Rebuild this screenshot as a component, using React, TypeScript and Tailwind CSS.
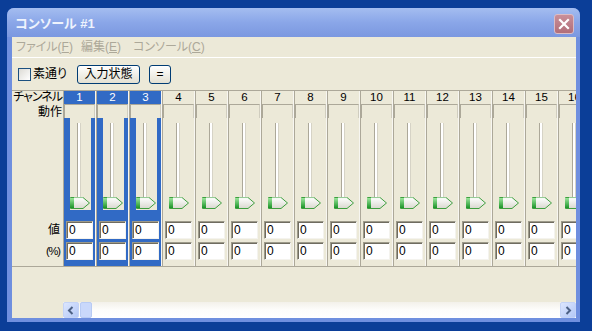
import clsx from "clsx";

const channels = Array.from({ length: 16 }, (_, i) => i + 1);
const selected = [1, 2, 3];

// スライダーのつまみ
function Slider() {
  return (
    <svg width="21" height="92" viewBox="0 0 21 92">
      <defs>
        <linearGradient id="thumbBody" x1="0" y1="0" x2="0" y2="1">
          <stop offset="0" stopColor="#ffffff" />
          <stop offset="1" stopColor="#d9d8cf" />
        </linearGradient>
        <linearGradient id="thumbGreen" x1="0" y1="0" x2="0" y2="1">
          <stop offset="0" stopColor="#9be59b" />
          <stop offset="1" stopColor="#1c9428" />
        </linearGradient>
      </defs>
      <rect x="7" y="5" width="1" height="82" fill="#aca899" />
      <rect x="8" y="5" width="2" height="82" fill="#ffffff" />
      <rect x="10" y="5" width="1" height="82" fill="#d6d3c6" />
      <path d="M0.5 79.5 H13 L19.5 85 L13 90.5 H0.5 Z" fill="url(#thumbBody)" stroke="#3f9f3f" />
      <rect x="0" y="80" width="4" height="10" fill="url(#thumbGreen)" />
      <path d="M4 80 H13" stroke="#eef7ee" />
    </svg>
  );
}

function TextBox() {
  return (
    <div className="ml-[2px] w-[27px] h-[18px] bg-white border border-t-[#9d9a8a] border-l-[#9d9a8a] border-r-[#f4f3ee] border-b-[#f4f3ee] shadow-[inset_1px_1px_0_#6f6c60] pl-[2px] text-[12px] leading-[16px] text-black">
      0
    </div>
  );
}

function Channel({ n }: { n: number }) {
  const on = selected.includes(n);
  return (
    <div className="w-[33px] shrink-0 border-l border-[#aca899] flex">
      <div
        className={clsx(
          "w-[32px] border-r border-[#f7f6f1] flex flex-col",
          on && "bg-[#316ac5]"
        )}
      >
        <div
          className={clsx(
            "h-[13px] text-[11.5px] leading-[13px] text-center",
            on ? "text-white" : "text-black"
          )}
        >
          {n}
        </div>
        <div className="h-[14px] bg-[#ece9d8] border-t border-l border-r border-t-[#aca899] border-l-[#aca899] border-r-[#d0cdbf]" />
        <div className="h-[103px]">
          <div className="ml-[6px] w-[21px] h-[92px] bg-[#ece9d8]">
            <Slider />
          </div>
        </div>
        <TextBox />
        <div className="h-[3px]" />
        <TextBox />
      </div>
    </div>
  );
}

function ScrollButton({ dir }: { dir: "left" | "right" }) {
  return (
    <div className="w-[16px] h-[16px] rounded-[2px] border border-[#c4d3f6] bg-gradient-to-br from-[#dce6fe] to-[#b4c8f6] flex items-center justify-center">
      <svg width="8" height="9" viewBox="0 0 8 9">
        <path
          d={dir === "left" ? "M5.5 1 L2 4.5 L5.5 8" : "M2.5 1 L6 4.5 L2.5 8"}
          fill="none"
          stroke="#4d6185"
          strokeWidth="2"
        />
      </svg>
    </div>
  );
}

export default function App() {
  return (
    <div className="w-[592px] h-[331px] bg-[#0b3e98] pt-[8px] pl-[7px] font-['Liberation_Sans','Noto_Sans_CJK_JP',sans-serif] [font-feature-settings:'palt'] overflow-hidden">
      <div className="w-[573px] h-[314px] rounded-t-[7px] bg-[#6f8fdf] flex flex-col">
        {/* タイトルバー */}
        <div className="h-[29px] rounded-t-[7px] bg-gradient-to-b from-[#a4bdf0] via-[#8aa6e8] to-[#7b98e0] flex items-center pl-[8px] pr-[6px] pt-[3px]">
          <span className="text-[13px] font-bold text-[#eef3fd] flex-1">コンソール #1</span>
          <div className="w-[20px] h-[20px] rounded-[3px] border border-[#dcbcc4] bg-gradient-to-b from-[#c98f99] to-[#b16e79] flex items-center justify-center">
            <svg width="12" height="12" viewBox="0 0 12 12">
              <path d="M2 2 L10 10 M10 2 L2 10" stroke="#ffffff" strokeWidth="2.2" strokeLinecap="square" />
            </svg>
          </div>
        </div>

        {/* クライアント */}
        <div className="ml-[5px] mr-[4px] h-[281px] bg-[#ece9d8] flex flex-col text-[12px] text-black">
          <div className="h-[20px] flex items-center pl-[4px] text-[#aca899] text-[12px]">
            <span className="w-[65px]">ファイル(<span className="underline">F</span>)</span>
            <span className="w-[52px]">編集(<span className="underline">E</span>)</span>
            <span>コンソール(<span className="underline">C</span>)</span>
          </div>
          <div className="h-[1px] bg-white" />

          <div className="h-[32px] flex items-center pl-[6px]">
            <div className="w-[13px] h-[13px] border border-[#1c5180] bg-gradient-to-br from-[#dcdbd5] to-white" />
            <span className="ml-[2px] w-[44px]">素通り</span>
            <div className="w-[63px] h-[19px] rounded-[3px] border border-[#003c74] bg-gradient-to-b from-white to-[#e3e0d2] flex items-center justify-center">
              入力状態
            </div>
            <div className="ml-[9px] w-[22px] h-[19px] rounded-[3px] border border-[#003c74] bg-gradient-to-b from-white to-[#e3e0d2] flex items-center justify-center">
              =
            </div>
          </div>

          {/* チャンネル表 */}
          <div className="flex border-t border-b border-[#aca899] h-[177px]">
            <div className="w-[51px] shrink-0 flex flex-col items-end pr-[1px] whitespace-nowrap">
              <div className="h-[13px] leading-[12px] tracking-[-1px]">チャンネル</div>
              <div className="h-[14px] leading-[16px]">動作</div>
              <div className="h-[103px]" />
              <div className="h-[18px] leading-[18px] pr-[2px]">値</div>
              <div className="h-[3px]" />
              <div className="h-[18px] leading-[18px] pr-[2px] text-[11px] tracking-[-1px]">(%)</div>
            </div>
            <div className="flex-1 min-w-0 flex overflow-x-clip">
              {channels.map((n) => (
                <Channel key={n} n={n} />
              ))}
            </div>
          </div>

          <div className="flex-1" />

          <div className="h-[16px] flex">
            <div className="w-[51px] shrink-0" />
            <div className="flex-1 flex bg-gradient-to-b from-[#f3f1ea] via-[#fdfdfb] to-white">
              <ScrollButton dir="left" />
              <div className="ml-[1px] w-[12px] h-[16px] rounded-[2px] border border-[#b8cbf4] bg-[#c9d8fb]" />
              <div className="flex-1" />
              <ScrollButton dir="right" />
            </div>
          </div>
        </div>
      </div>
    </div>
  );
}
